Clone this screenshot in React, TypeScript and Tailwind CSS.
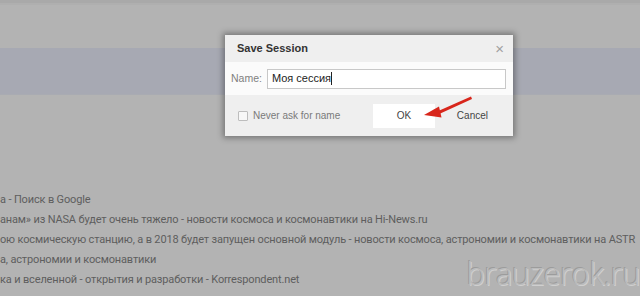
import React from "react";

const lines = [
  "а - Поиск в Google",
  "анам» из NASA будет очень тяжело - новости космоса и космонавтики на Hi-News.ru",
  "ою космическую станцию, а в 2018 будет запущен основной модуль - новости космоса, астрономии и космонавтики на ASTR",
  "а, астрономии и космонавтики",
  "ка и вселенной - открытия и разработки - Korrespondent.net",
];

const Arrow = () => (
  <svg
    className="absolute left-[418px] top-[94px]"
    width="58"
    height="28"
    viewBox="0 0 58 28"
  >
    <path d="M53 2.5 L18 18 L19 21 L54 5 Z" fill="#d8261b" />
    <path d="M6 21 L21 12.5 L23.5 23.5 Z" fill="#d8261b" />
  </svg>
);

const SaveSessionDialog = () => (
  <div className="absolute left-[225px] top-[35px] w-[288px] bg-white shadow-[0_0_6px_2px_rgba(0,0,0,0.35)] font-['Liberation_Sans',Arial,sans-serif]">
    <div className="h-[27px] bg-[#efefef] flex items-center justify-between pl-[12px] pr-[9px]">
      <span className="text-[11px] font-bold text-[#333]">Save Session</span>
      <span className="text-[15px] leading-none text-[#a0a0a0]">×</span>
    </div>
    <div className="h-[33px] bg-[#fbfbfb] flex items-center pl-[6px] pr-[7px] gap-[5px]">
      <span className="text-[10.5px] text-[#808080]">Name:</span>
      <div className="flex-1 h-[20px] border border-[#c8c8c8] bg-white flex items-center pl-[4px]">
        <span className="text-[11px] text-[#222]">Моя сессия</span>
        <span className="w-px h-[13px] bg-[#222]" />
      </div>
    </div>
    <div className="h-[41px] bg-[#efefef] flex items-center pl-[13px] pr-[25px]">
      <span className="w-[10px] h-[10px] border border-[#bdbdbd] bg-[#f7f7f7] rounded-[1px]" />
      <span className="ml-[5px] text-[10px] text-[#7a7a7a]">Never ask for name</span>
      <div className="ml-auto w-[62px] h-[24px] bg-white flex items-center justify-center text-[10px] text-[#444]">
        OK
      </div>
      <span className="ml-[22px] text-[10px] text-[#444]">Cancel</span>
    </div>
  </div>
);

export default function App() {
  return (
    <div className="relative w-[640px] h-[296px] overflow-hidden bg-[#b3b3b3]">
      <div className="h-[3px] bg-[#a9a9a9]" />
      <div className="h-[2px] bg-[#afafaf]" />
      <div className="h-[43px]" />
      <div className="h-[47px] bg-[#a7a9b3] border-b border-[#a9abb2]" />
      <div className="h-[95px]" />
      <div className="flex flex-col font-['Roboto',Arial,sans-serif] text-[11px] tracking-[-0.15px] text-[#5e5e5e] whitespace-nowrap">
        {lines.map((l, i) => (
          <div key={i} className="h-[20px] leading-[20px]">
            {l}
          </div>
        ))}
      </div>

      <SaveSessionDialog />
      <Arrow />

      <div className="absolute right-[0px] top-[258px] font-['Open_Sans',Arial,sans-serif] font-light text-[31px] leading-none tracking-[-0.5px] text-[#bcbcbc] [text-shadow:-1px_-1px_0_#9c9c9c,1px_1px_0_#cfcfcf]">
        brauzerok.ru
      </div>
    </div>
  );
}
